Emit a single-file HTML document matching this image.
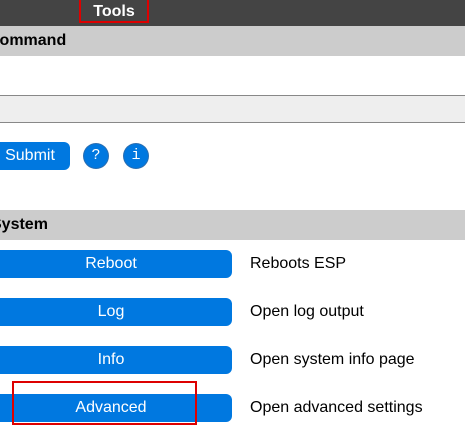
<!DOCTYPE html>
<html><head><style>
body{margin:0;width:465px;height:431px;overflow:hidden;background:#fff;font-family:"Liberation Sans",Arial,sans-serif;position:relative}
.a{position:absolute}
.bar{left:0;top:0;width:465px;height:26px;background:#444}
.hd{left:0;width:465px;height:30px;background:#ccc;font-weight:bold;font-size:16px;line-height:30px}
.btn{background:#0078e0;color:#fff;border-radius:6px;font-size:16px;text-align:center;line-height:28px;height:28px}
.lbl{font-size:16px;left:250px;line-height:28px;color:#000}
.c{width:24px;height:24px;border-radius:50%;background:#0078e0;color:#fff;text-align:center;line-height:24px;font-size:15px;font-family:"Liberation Mono",monospace;box-shadow:0 0 0 1px #2a6db0}
</style></head><body>
<div class="a bar"></div>
<div class="a" style="left:79px;top:0;width:66px;height:21px;border:2px solid #d00;border-top:none;color:#fff;font-weight:bold;font-size:16px;text-align:center;line-height:24px">Tools</div>
<div class="a hd" style="top:26px;left:-12px;width:477px">Command</div>
<div class="a" style="left:0;top:95px;width:465px;height:26px;background:#eee;border-top:1px solid #888;border-bottom:1px solid #888"></div>
<div class="a btn" style="left:-10px;top:142px;width:80px">Submit</div>
<div class="a c" style="left:84px;top:144px">?</div>
<div class="a c" style="left:124px;top:144px">i</div>
<div class="a hd" style="top:210px;left:-9px;width:474px">System</div>
<div class="a btn" style="left:-10px;top:250px;width:242px">Reboot</div>
<div class="a lbl" style="top:250px">Reboots ESP</div>
<div class="a btn" style="left:-10px;top:298px;width:242px">Log</div>
<div class="a lbl" style="top:298px">Open log output</div>
<div class="a btn" style="left:-10px;top:346px;width:242px">Info</div>
<div class="a lbl" style="top:346px">Open system info page</div>
<div class="a btn" style="left:-10px;top:394px;width:242px">Advanced</div>
<div class="a lbl" style="top:394px">Open advanced settings</div>
<div class="a" style="left:12px;top:381px;width:181px;height:40px;border:2px solid #d00"></div>
</body></html>
